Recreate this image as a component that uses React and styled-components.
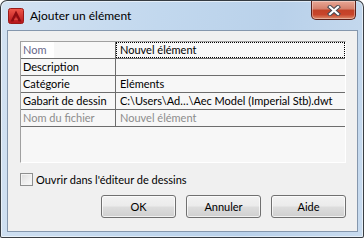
import React from 'react';
import styled, { createGlobalStyle } from 'styled-components';

const Global = createGlobalStyle`
  html, body { margin: 0; padding: 0; background: #ffffff; }
  body { font-family: Lato, "Open Sans", sans-serif; font-size: 11px; color: #000; }
  * { box-sizing: border-box; }
`;

const Window = styled.div`
  width: 364px;
  height: 238px;
  border: 1px solid rgba(0, 0, 0, 0.72);
  border-radius: 7px 7px 2px 2px;
  background: linear-gradient(100deg, #d3e2f2 0%, #c2d8ee 40%, #b9d1ea 70%, #c8dbef 100%);
  display: flex;
  flex-direction: column;
  overflow: hidden;
  box-shadow: inset 0 0 0 1px rgba(255, 255, 255, 0.55);
`;

const TitleBar = styled.div`
  height: 29px;
  display: flex;
  align-items: flex-start;
  padding-left: 7px;
`;

const AppIcon = styled.svg`
  width: 16px;
  height: 16px;
  margin-top: 7px;
  flex: none;
`;

const Title = styled.div`
  margin-left: 6px;
  margin-top: 7px;
  line-height: 16px;
  font-size: 12px;
  color: #000;
`;

const CloseButton = styled.div`
  margin-left: auto;
  margin-right: 7px;
  width: 45px;
  height: 19px;
  border: 1px solid #5b2019;
  border-top: none;
  border-radius: 0 0 5px 5px;
  background: linear-gradient(180deg, #e8a795 0%, #d47f6b 45%, #c24227 50%, #c8452b 75%, #dc8b6b 100%);
  box-shadow: inset 0 0 0 1px rgba(255, 255, 255, 0.35);
  display: flex;
  align-items: center;
  justify-content: center;
`;

const Client = styled.div`
  flex: 1;
  margin: 0 5px 5px 6px;
  border: 1px solid #8597ad;
  background: #f0f0f0;
  display: flex;
  flex-direction: column;
  padding: 10px 11px 0 12px;
`;

const Table = styled.div`
  height: 122px;
  background: #f7f7f7;
  border-top: 1px solid #a0a0a0;
  border-left: 1px solid #a0a0a0;
  border-right: 1px solid #ffffff;
  border-bottom: 1px solid #ffffff;
  display: flex;
  flex-direction: column;
`;

const Row = styled.div`
  height: 17px;
  display: grid;
  grid-template-columns: 95px 1fr;
  border-bottom: 1px solid #6d6d6d;
`;

const Label = styled.div`
  border-right: 1px solid #6d6d6d;
  padding-left: 2px;
  line-height: 16px;
  white-space: nowrap;
  overflow: hidden;
  color: ${p => (p.$dim ? '#8c8c8c' : '#000')};
`;

const LabelText = styled.span`
  display: inline-block;
  height: 16px;
  padding-right: 7px;
  background: ${p => (p.$sel ? '#ffffff' : 'transparent')};
  color: ${p => (p.$sel ? '#67678a' : 'inherit')};
`;

const Value = styled.div`
  padding-left: 3px;
  line-height: 14px;
  white-space: nowrap;
  overflow: hidden;
  border: 1px ${p => (p.$focus ? 'dotted #000' : 'solid transparent')};
  color: ${p => (p.$dim ? '#8c8c8c' : '#000')};
`;

const CheckRow = styled.label`
  margin-top: 9px;
  height: 14px;
  display: flex;
  align-items: center;
  gap: 3px;
`;

const Box = styled.span`
  width: 13px;
  height: 13px;
  border: 1px solid #8e8f8f;
  background: linear-gradient(135deg, #dcdcdc 0%, #f0f0f0 60%, #fafafa 100%);
  box-shadow: inset 0 0 0 1px #f4f4f4;
  flex: none;
`;

const Buttons = styled.div`
  margin-top: 9px;
  display: flex;
  justify-content: flex-end;
  gap: 10px;
`;

const Button = styled.button`
  width: 75px;
  height: 23px;
  border: 1px solid #707070;
  border-radius: 3px;
  background: linear-gradient(180deg, #f2f2f2 0%, #ebebeb 48%, #dddddd 52%, #cfcfcf 100%);
  box-shadow: inset 0 0 0 1px rgba(255, 255, 255, 0.7);
  font-family: inherit;
  font-size: 11px;
  color: #000;
  padding: 0;
`;

const rows = [
  { label: 'Nom', value: 'Nouvel élément', sel: true, focus: true },
  { label: 'Description', value: '' },
  { label: 'Catégorie', value: 'Eléments' },
  { label: 'Gabarit de dessin', value: 'C:\\Users\\Ad…\\Aec Model (Imperial Stb).dwt' },
  { label: 'Nom du fichier', value: 'Nouvel élément', dim: true },
];

export default function App() {
  return (
    <>
      <Global />
      <Window>
        <TitleBar>
          <AppIcon viewBox="0 0 16 16">
            <defs>
              <linearGradient id="ag" x1="0" y1="0" x2="0" y2="1">
                <stop offset="0" stopColor="#f0584a" />
                <stop offset="1" stopColor="#b4141a" />
              </linearGradient>
            </defs>
            <rect x="0.5" y="0.5" width="15" height="15" rx="2" fill="url(#ag)" stroke="#9a1a18" />
            <path d="M8 2.5 L13.5 13.5 H10.6 L8 8 L5.4 13.5 H2.5 Z" fill="#8e0d12" />
            <path d="M6.6 10.6 H9.4 L10 11.8 H6 Z" fill="#e35046" />
          </AppIcon>
          <Title>Ajouter un élément</Title>
          <CloseButton>
            <svg width="14" height="11" viewBox="0 0 14 11">
              <path d="M3 2 L11 9 M11 2 L3 9" stroke="#4a4a52" strokeWidth="4.2" strokeLinecap="square" />
              <path d="M3 2 L11 9 M11 2 L3 9" stroke="#ffffff" strokeWidth="2.2" strokeLinecap="square" />
            </svg>
          </CloseButton>
        </TitleBar>
        <Client>
          <Table>
            {rows.map(r => (
              <Row key={r.label}>
                <Label $dim={r.dim}>
                  <LabelText $sel={r.sel}>{r.label}</LabelText>
                </Label>
                <Value $focus={r.focus} $dim={r.dim}>{r.value}</Value>
              </Row>
            ))}
          </Table>
          <CheckRow>
            <Box />
            <span>Ouvrir dans l'éditeur de dessins</span>
          </CheckRow>
          <Buttons>
            <Button>OK</Button>
            <Button>Annuler</Button>
            <Button>Aide</Button>
          </Buttons>
        </Client>
      </Window>
    </>
  );
}
